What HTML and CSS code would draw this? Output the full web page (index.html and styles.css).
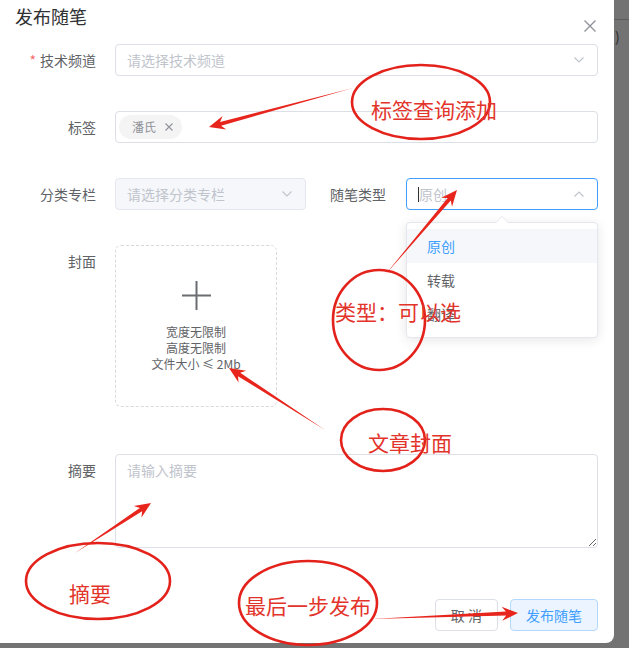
FILE: index.html
```html
<!DOCTYPE html>
<html lang="zh-CN">
<head>
<meta charset="utf-8">
<title>发布随笔</title>
<link rel="stylesheet" href="styles.css">
</head>
<body>
<div class="page">
  <div class="dialog">
    <div class="dialog-header">
      <span class="dialog-title">发布随笔</span>
      <svg class="close" width="12" height="12" viewBox="0 0 12 12"><path d="M0.5 0.5L11.5 11.5M11.5 0.5L0.5 11.5"/></svg>
    </div>
    <div class="form">
      <div class="form-item">
        <label class="label"><span class="req">*</span>技术频道</label>
        <div class="select w-full">
          <span class="placeholder">请选择技术频道</span>
          <svg class="chev" width="10" height="6" viewBox="0 0 10 6"><path d="M0.5 0.5L5 5L9.5 0.5"/></svg>
        </div>
      </div>
      <div class="form-item">
        <label class="label">标签</label>
        <div class="tag-input w-full">
          <span class="tag">潘氏<svg class="tag-x" width="8" height="8" viewBox="0 0 8 8"><path d="M0.5 0.5L7.5 7.5M7.5 0.5L0.5 7.5"/></svg></span>
        </div>
      </div>
      <div class="form-item">
        <label class="label">分类专栏</label>
        <div class="select disabled w-half">
          <span class="placeholder">请选择分类专栏</span>
          <svg class="chev" width="10" height="6" viewBox="0 0 10 6"><path d="M0.5 0.5L5 5L9.5 0.5"/></svg>
        </div>
        <label class="label label-inline">随笔类型</label>
        <div class="select focus w-half2">
          <span class="caret"></span><span class="placeholder">原创</span>
          <svg class="chev" width="10" height="6" viewBox="0 0 10 6"><path d="M0.5 5.5L5 1L9.5 5.5"/></svg>
          <div class="dropdown">
            <ul class="options">
              <li class="option selected">原创</li>
              <li class="option">转载</li>
              <li class="option">翻译</li>
            </ul>
          </div>
        </div>
      </div>
      <div class="form-item item-upload">
        <label class="label">封面</label>
        <div class="upload">
          <svg class="plus" width="29" height="29" viewBox="0 0 29 29"><path d="M14.5 0V29M0 14.5H29"/></svg>
          <div class="upload-tip">宽度无限制<br>高度无限制<br>文件大小 ≤ 2Mb</div>
        </div>
      </div>
      <div class="form-item item-last">
        <label class="label">摘要</label>
        <textarea class="textarea" placeholder="请输入摘要"></textarea>
      </div>
    </div>
    <div class="footer">
      <button class="btn">取 消</button>
      <button class="btn btn-primary">发布随笔</button>
    </div>
  </div>
  <div class="side">
    <div class="side-line"></div>
    <span class="side-glyph">)</span>
  </div>

  <svg class="notes" width="629" height="648" viewBox="0 0 629 648">
    <g class="ring">
      <ellipse cx="421" cy="102" rx="69" ry="37"/>
      <ellipse cx="379" cy="320" rx="46" ry="50"/>
      <ellipse cx="383" cy="440" rx="42" ry="31"/>
      <ellipse cx="98" cy="581" rx="72" ry="38"/>
      <ellipse cx="308" cy="603" rx="69" ry="42"/>
    </g>
    <g class="arrow">
      <polygon points="353,88 220.1,122.0 222.6,116.0 209,127 226.2,129.6 221.1,125.8"/>
      <polygon points="385,275 450.8,200.5 452.0,206.7 457,190 441.3,197.7 447.7,197.9"/>
      <polygon points="325,430 240.2,372.8 246.2,370.8 229,368 238.6,382.6 238.0,376.2"/>
      <polygon points="75,553 142.1,511.3 141.5,517.6 151,503 133.8,506.0 139.9,507.9"/>
      <polygon points="372,619 506.1,615.5 502.3,620.7 518,613 501.7,606.7 505.9,611.5"/>
    </g>
    <g class="note-text">
      <text x="371" y="118">标签查询添加</text>
      <text x="335" y="320">类型：可以选</text>
      <text x="368" y="451">文章封面</text>
      <text x="69" y="602">摘要</text>
      <text x="245" y="614">最后一步发布</text>
    </g>
  </svg>
</div>
</body>
</html>
```

FILE: styles.css
```css
* { box-sizing: border-box; }
html, body { margin: 0; padding: 0; }
body {
  background: #737373;
  font-family: "Noto Sans CJK SC", "Noto Sans", sans-serif;
  font-size: 14px;
  color: #606266;
}
.page {
  position: relative;
  width: 629px;
  height: 648px;
  display: flex;
  align-items: flex-start;
  overflow: hidden;
}
.dialog {
  width: 614px;
  height: 643px;
  background: #fff;
  border-bottom-right-radius: 8px;
  flex-shrink: 0;
}
.side {
  flex: 1;
  padding-top: 19px;
}
.side-line {
  height: 1px;
  background: #5c5c5c;
}
.side-glyph {
  display: block;
  margin-top: 8px;
  font-size: 14px;
  line-height: 16px;
  color: #2e2e2e;
  margin-left: 1px;
}
.dialog-header {
  height: 32px;
  display: flex;
  justify-content: space-between;
  align-items: flex-start;
  padding: 4px 18px 0 15px;
}
.dialog-title {
  font-size: 18px;
  line-height: 24px;
  color: #303133;
}
.close {
  margin-top: 16px;
  stroke: #909399;
  stroke-width: 1.4;
  fill: none;
}
.form { padding-top: 12px; }
.form-item {
  display: flex;
  align-items: flex-start;
  margin-bottom: 35px;
}
.item-upload { margin-bottom: 47px; }
.item-last { margin-bottom: 0; }
.label {
  width: 115px;
  flex-shrink: 0;
  padding-right: 19px;
  text-align: right;
  line-height: 32px;
  font-size: 14px;
  color: #606266;
}
.label-inline {
  width: 100px;
  padding-right: 20px;
}
.req {
  color: #f56c6c;
  margin-right: 4px;
}
.w-full { width: 483px; }
.w-half { width: 191px; }
.w-half2 { width: 192px; }
.select {
  position: relative;
  height: 32px;
  border: 1px solid #dcdfe6;
  border-radius: 4px;
  display: flex;
  align-items: center;
  padding: 0 13px 0 11px;
  background: #fff;
}
.select.disabled {
  background: #f5f7fa;
  border-color: #e4e7ed;
}
.select.focus { border-color: #409eff; }
.placeholder {
  color: #c0c4cc;
  font-size: 14px;
  line-height: 20px;
}
.caret {
  width: 1px;
  height: 15px;
  background: #303133;
}
.chev {
  margin-left: auto;
  stroke: #c0c4cc;
  stroke-width: 1.2;
  fill: none;
}
.tag-input {
  height: 32px;
  border: 1px solid #dcdfe6;
  border-radius: 4px;
  padding: 3px;
  display: flex;
  align-items: flex-start;
}
.tag {
  height: 24px;
  border-radius: 12px;
  background: #f4f4f5;
  color: #909399;
  font-size: 12px;
  line-height: 24px;
  padding: 0 9px 0 13px;
  display: flex;
  align-items: center;
  gap: 9px;
}
.tag-x {
  stroke: #909399;
  stroke-width: 1.1;
  fill: none;
}
.dropdown {
  position: absolute;
  top: 43px;
  left: -1px;
  width: 192px;
  background: #fff;
  border: 1px solid #e4e7ed;
  border-radius: 4px;
  box-shadow: 0 2px 12px rgba(0, 0, 0, 0.1);
  z-index: 2;
}
.dropdown::before,
.dropdown::after {
  content: "";
  position: absolute;
  left: 50%;
  margin-left: -6px;
  border: 6px solid transparent;
  border-top-width: 0;
}
.dropdown::before {
  top: -7px;
  border-bottom-color: #e4e7ed;
}
.dropdown::after {
  top: -6px;
  border-bottom-color: #fff;
}
.options {
  list-style: none;
  margin: 0;
  padding: 6px 0;
}
.option {
  height: 34px;
  line-height: 34px;
  padding: 0 20px;
  font-size: 14px;
  color: #606266;
}
.option.selected {
  color: #409eff;
  background: #f5f7fa;
}
.upload {
  width: 162px;
  height: 162px;
  border: 1px dashed #d9d9d9;
  border-radius: 6px;
  display: flex;
  flex-direction: column;
  align-items: center;
  justify-content: center;
}
.plus {
  stroke: #6b6d70;
  stroke-width: 2;
  fill: none;
}
.upload-tip {
  margin-top: 14px;
  font-size: 12px;
  line-height: 16px;
  color: #606266;
  text-align: center;
}
.textarea {
  width: 483px;
  height: 94px;
  border: 1px solid #dcdfe6;
  border-radius: 4px;
  padding: 5px 11px;
  font-family: "Noto Sans CJK SC", "Noto Sans", sans-serif;
  font-size: 14px;
  line-height: 1.5;
  color: #606266;
  resize: vertical;
  margin: 0;
  display: block;
}
.textarea::placeholder { color: #c0c4cc; }
.footer {
  margin-top: 51px;
  display: flex;
  justify-content: flex-end;
  gap: 12px;
  padding-right: 16px;
}
.btn {
  height: 32px;
  padding: 0 15px;
  border: 1px solid #dcdfe6;
  border-radius: 4px;
  background: #fff;
  color: #606266;
  font-family: "Noto Sans CJK SC", "Noto Sans", sans-serif;
  font-size: 14px;
  line-height: 30px;
}
.btn-primary {
  background: #ecf5ff;
  border-color: #b3d8ff;
  color: #409eff;
}
.notes {
  position: absolute;
  top: 0;
  left: 0;
  pointer-events: none;
  z-index: 5;
}
.ring ellipse {
  fill: none;
  stroke: #e3221b;
  stroke-width: 2.6;
}
.arrow polygon {
  fill: #e8251d;
}
.note-text text {
  fill: #e3342b;
  font-family: "Noto Sans CJK SC", "Noto Sans", sans-serif;
  font-size: 21px;
}
```
